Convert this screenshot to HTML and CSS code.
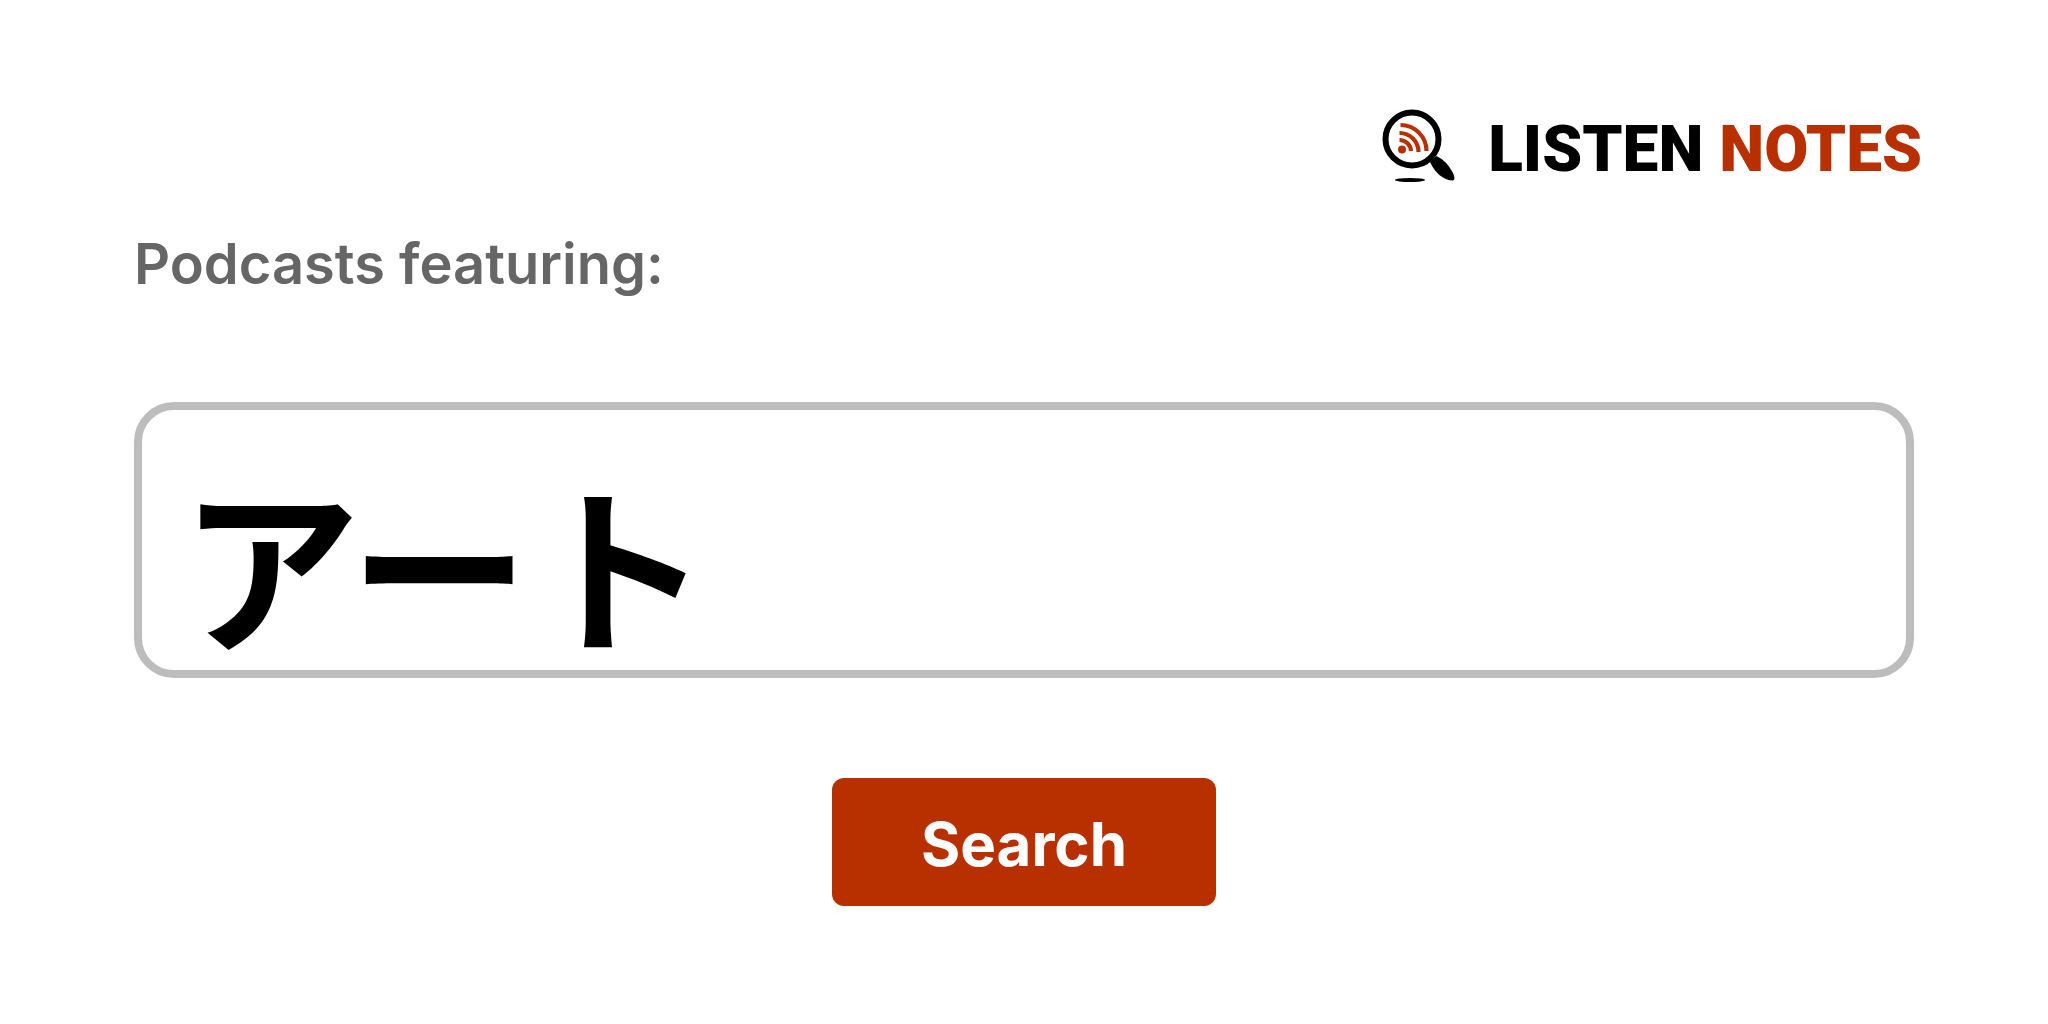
FILE: index.html
```html
<!DOCTYPE html>
<html lang="en">
  <head>
    <meta charset="UTF-8" />
    <meta name="viewport" content="width=device-width, initial-scale=1.0" />
    <title>Listen Notes</title>
    <link rel="stylesheet" href="styles.css">
  </head>
  <body>
    <header class="header">
      <a class="brand" href="#">
        <svg class="brand-icon" viewBox="0 0 74 74" aria-hidden="true">
          <circle cx="30" cy="31" r="26.5" fill="#fff" stroke="#000" stroke-width="6" />
          <path d="M48 54L54.500 48Q65 53 71 65Q74 72 71 72.500Q67 73 61 69.500Q53 65 48 54Z" fill="#000" />
          <ellipse cx="28" cy="72" rx="15" ry="2" fill="#000" />
          <g fill="none" stroke="#b93000" stroke-width="4.200">
            <path d="M18.500 17A26 26 0 0 1 44.500 43" />
            <path d="M17.500 25A19 19 0 0 1 36.500 44" />
            <path d="M17.500 32A11.500 11.500 0 0 1 29 43" />
          </g>
          <circle cx="20" cy="41.500" r="4" fill="#b93000" />
        </svg>
        <span class="brand-name">LISTEN <span class="brand-red">NOTES</span></span>
      </a>
    </header>
    <form class="search-form">
      <label for="query">Podcasts featuring:</label>
      <input type="text" id="query" class="query" value="アート" />
      <button type="submit" class="submit">Search</button>
    </form>
  </body>
</html>
```

FILE: styles.css
```css
* {
  margin: 0;
  padding: 0;
  box-sizing: border-box;
}
body {
  padding: 108px 134px 0;
  background-color: white;
  font-family: Inter, "Noto Sans CJK JP", sans-serif;
}
.header {
  display: flex;
  justify-content: flex-end;
  margin-right: -8px;
}
.brand {
  display: flex;
  align-items: flex-start;
  gap: 32px;
  color: black;
  text-decoration: none;
}
.brand-icon {
  width: 74px;
  height: 74px;
}
.brand-name {
  font-family: Roboto, sans-serif;
  font-size: 64px;
  font-weight: 900;
  line-height: 84px;
}
.brand-red {
  color: #b93000;
}
.search-form {
  display: flex;
  flex-direction: column;
  margin-top: 38px;
}
.search-form label {
  color: #666;
  font-size: 56px;
  font-weight: 600;
  line-height: 68px;
}
.query {
  width: 100%;
  height: 276px;
  margin-top: 104px;
  padding: 40px 38px 0;
  border: 8px solid #bdbdbd;
  border-radius: 40px;
  font-family: "Noto Sans CJK JP", sans-serif;
  font-size: 180px;
  font-weight: 700;
}
.submit {
  align-self: center;
  min-width: 384px;
  margin-top: 100px;
  padding: 30px 40px 26px;
  border: none;
  border-radius: 12px;
  background-color: #b93000;
  color: white;
  font-family: inherit;
  font-size: 60px;
  font-weight: 700;
  line-height: 72px;
  cursor: pointer;
}
.submit:hover {
  background-color: #992800;
}
```
